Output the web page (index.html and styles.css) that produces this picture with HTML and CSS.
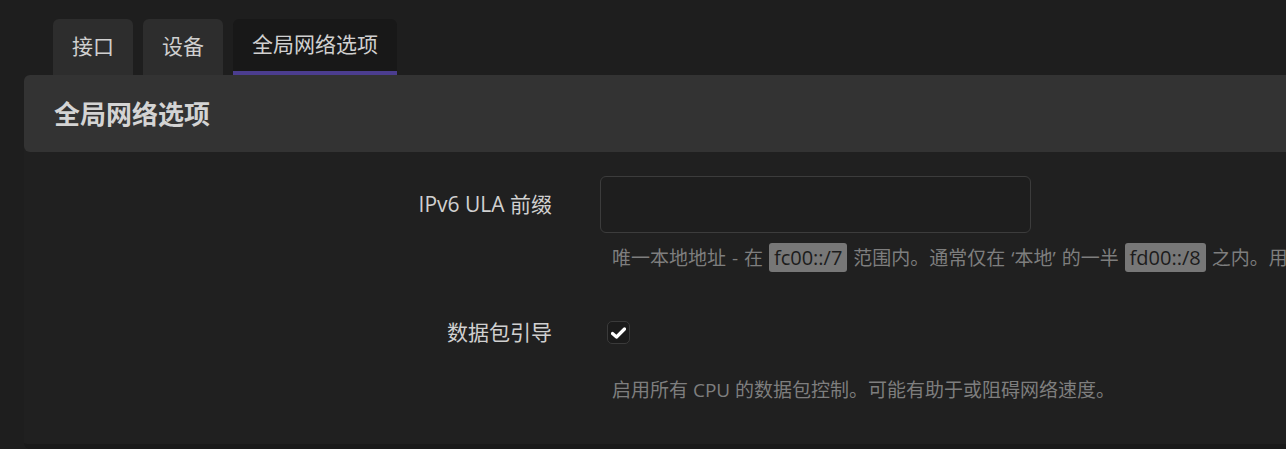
FILE: index.html
```html
<!DOCTYPE html>
<html lang="zh-CN">
<head>
<meta charset="utf-8">
<title>全局网络选项</title>
<link rel="stylesheet" href="styles.css">
</head>
<body>
<div class="page">
  <ul class="tabs">
    <li class="tab">接口</li>
    <li class="tab">设备</li>
    <li class="tab active">全局网络选项</li>
  </ul>
  <div class="panel">
    <div class="panel-head"><h3>全局网络选项</h3></div>
    <div class="panel-body">
      <div class="row">
        <label class="row-label">IPv6 ULA 前缀</label>
        <div class="row-field">
          <div class="field-line"><input class="text-input" type="text"></div>
          <div class="help help-wide">唯一本地地址 - 在 <code>fc00::/7</code> 范围内。通常仅在 ‘本地’ 的一半 <code>fd00::/8</code> 之内。用于生成此设备上的全局 IPv6 地址。</div>
        </div>
      </div>
      <div class="row row-check">
        <label class="row-label">数据包引导</label>
        <div class="row-field">
          <div class="field-line">
            <span class="checkbox"><svg width="15" height="12" viewBox="0 0 15 12"><path d="M1.5 6.5 L5.5 10 L13.5 2" fill="none" stroke="#fff" stroke-width="3.2" stroke-linecap="round" stroke-linejoin="round"/></svg></span>
          </div>
          <div class="help">启用所有 CPU 的数据包控制。可能有助于或阻碍网络速度。</div>
        </div>
      </div>
    </div>
  </div>
</div>
</body>
</html>
```

FILE: styles.css
```css
html, body {
  margin: 0;
  padding: 0;
  background: #1e1e1e;
  overflow: hidden;
}
body {
  font-family: "Open Sans", "Noto Sans CJK SC", sans-serif;
  color: #cfcfcf;
}
.page {
  width: 1400px;
}
.tabs {
  list-style: none;
  margin: 0;
  padding: 19px 0 0 53px;
  display: flex;
  gap: 10px;
}
.tab {
  height: 56px;
  box-sizing: border-box;
  padding: 0 19px;
  font-size: 21px;
  line-height: 54px;
  background: #2d2d2d;
  border-radius: 6px 6px 0 0;
  color: #d0d0d0;
}
.tab.active {
  background: #181818;
  border-bottom: 4px solid #4b3d8f;
  line-height: 50px;
}
.panel {
  margin-left: 24px;
  background: #202020;
  border-bottom: 5px solid #1a1a1a;
  border-radius: 6px;
}
.panel-head {
  height: 77px;
  background: #333333;
  border-radius: 6px;
  display: flex;
  align-items: center;
  padding-left: 30px;
}
.panel-head h3 {
  margin: 0;
  font-size: 26px;
  font-weight: 700;
  color: #d4d4d4;
  line-height: 1;
}
.panel-body {
  padding: 24px 0 41px;
}
.row {
  display: grid;
  grid-template-columns: 528px 1fr;
  column-gap: 48px;
}
.row + .row {
  margin-top: 33px;
}
.row-label {
  text-align: right;
  font-size: 21px;
  line-height: 57px;
  color: #d0d0d0;
}
.field-line {
  height: 57px;
  display: flex;
  align-items: center;
}
.text-input {
  width: 431px;
  height: 57px;
  box-sizing: border-box;
  background: #1e1e1e;
  border: 1px solid #3c3c3c;
  border-radius: 6px;
  outline: none;
  margin: 0;
}
.help {
  margin-top: 12px;
  padding-left: 12px;
  font-size: 19px;
  line-height: 26px;
  color: #7e7e7e;
  white-space: nowrap;
}
.help-wide {
  word-spacing: 1px;
}
.help code {
  font-family: "Open Sans", sans-serif;
  font-size: 20px;
  word-spacing: 0;
  background: #777777;
  color: #1c1c1c;
  border-radius: 3px;
  padding: 1px 5px;
}
.row-check .field-line {
  padding-left: 7px;
}
.row-check .help {
  margin-top: 16px;
}
.checkbox {
  width: 23px;
  height: 23px;
  box-sizing: border-box;
  border: 1px solid #3a3a3a;
  border-radius: 5px;
  display: flex;
  align-items: center;
  justify-content: center;
  background: #1b1b1b;
}
```
